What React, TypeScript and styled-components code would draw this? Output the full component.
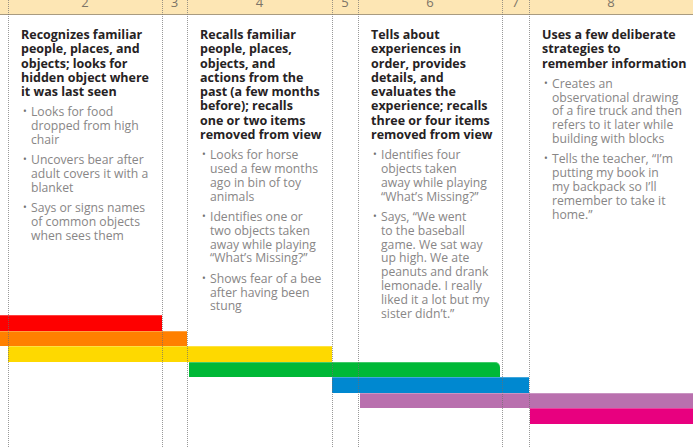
import React from "react";
import styled, { createGlobalStyle } from "styled-components";

const GlobalStyle = createGlobalStyle`
  html, body {
    margin: 0;
    padding: 0;
    background: #ffffff;
  }
  body {
    font-family: "Open Sans", "Liberation Sans", Arial, sans-serif;
  }
`;

// column widths taken from the chart: a sliver, then age columns and gap columns
const Chart = styled.div`
  display: grid;
  grid-template-columns: 8px 154px 25px 145px 26px 144px 27px 1fr;
  grid-template-rows: 15px 300px 16px 15px 16px 15px 16px 15px 16px 1fr;
  width: 693px;
  height: 447px;
  overflow: hidden;
  background: #ffffff;
`;

const HeaderCell = styled.div<{ $col: number }>`
  grid-row: 1;
  grid-column: ${(p) => p.$col};
  background: #fde6b4;
  border-bottom: 1px solid #a99b80;
  overflow: hidden;
  text-align: center;
  color: #7c7467;
  font-size: 13px;
  line-height: 12px;
`;

const HeaderNumber = styled.span`
  display: block;
  margin-top: -4px;
`;

const Divider = styled.div<{ $col: number }>`
  grid-row: 1 / -1;
  grid-column: ${(p) => p.$col};
  border-left: 1px dotted rgba(110, 110, 110, 0.7);
  z-index: 2;
  pointer-events: none;
`;

const Cell = styled.div<{ $col: number }>`
  grid-row: 2;
  grid-column: ${(p) => p.$col};
  padding: 13px 4px 0 13px;
  overflow: visible;
  white-space: nowrap;
`;

const Heading = styled.div`
  font-weight: 700;
  font-size: 12.5px;
  line-height: 14.3px;
  color: #262223;
  margin-bottom: 6px;
`;

const BulletList = styled.ul`
  list-style: none;
  margin: 0;
  padding: 0;
`;

const BulletItem = styled.li`
  display: flex;
  font-size: 12.2px;
  line-height: 13.8px;
  color: #888686;
  & + & {
    margin-top: 6.5px;
  }
`;

const Marker = styled.span`
  flex: 0 0 10px;
  padding-left: 2px;
  box-sizing: border-box;
  color: #6f6f6f;
  font-size: 10px;
`;

const Bar = styled.div<{
  $row: number;
  $from: number;
  $to: number;
  $color: string;
  $inset?: string;
  $round?: boolean;
}>`
  grid-row: ${(p) => p.$row};
  grid-column: ${(p) => p.$from} / ${(p) => p.$to};
  margin: ${(p) => p.$inset || "0"};
  background: ${(p) => p.$color};
  border-top-right-radius: ${(p) => (p.$round ? "5px" : "0")};
  box-shadow: inset 0 1px 0 rgba(255, 255, 255, 0.25);
`;

type Column = {
  col: number;
  heading: string[];
  bullets: string[][];
};

const columns: Column[] = [
  {
    col: 2,
    heading: [
      "Recognizes familiar",
      "people, places, and",
      "objects; looks for",
      "hidden object where",
      "it was last seen",
    ],
    bullets: [
      ["Looks for food", "dropped from high", "chair"],
      ["Uncovers bear after", "adult covers it with a", "blanket"],
      ["Says or signs names", "of common objects", "when sees them"],
    ],
  },
  {
    col: 4,
    heading: [
      "Recalls familiar",
      "people, places,",
      "objects, and",
      "actions from the",
      "past (a few months",
      "before); recalls",
      "one or two items",
      "removed from view",
    ],
    bullets: [
      ["Looks for horse", "used a few months", "ago in bin of toy", "animals"],
      [
        "Identifies one or",
        "two objects taken",
        "away while playing",
        "\u201cWhat\u2019s Missing?\u201d",
      ],
      ["Shows fear of a bee", "after having been", "stung"],
    ],
  },
  {
    col: 6,
    heading: [
      "Tells about",
      "experiences in",
      "order, provides",
      "details, and",
      "evaluates the",
      "experience; recalls",
      "three or four items",
      "removed from view",
    ],
    bullets: [
      [
        "Identifies four",
        "objects taken",
        "away while playing",
        "\u201cWhat\u2019s Missing?\u201d",
      ],
      [
        "Says, \u201cWe went",
        "to the baseball",
        "game. We sat way",
        "up high. We ate",
        "peanuts and drank",
        "lemonade. I really",
        "liked it a lot but my",
        "sister didn\u2019t.\u201d",
      ],
    ],
  },
  {
    col: 8,
    heading: ["Uses a few deliberate", "strategies to", "remember information"],
    bullets: [
      [
        "Creates an",
        "observational drawing",
        "of a fire truck and then",
        "refers to it later while",
        "building with blocks",
      ],
      [
        "Tells the teacher, \u201cI\u2019m",
        "putting my book in",
        "my backpack so I\u2019ll",
        "remember to take it",
        "home.\u201d",
      ],
    ],
  },
];

const headers = [
  { col: 1, label: "" },
  { col: 2, label: "2" },
  { col: 3, label: "3" },
  { col: 4, label: "4" },
  { col: 5, label: "5" },
  { col: 6, label: "6" },
  { col: 7, label: "7" },
  { col: 8, label: "8" },
];

const bars = [
  { row: 3, from: 1, to: 3, color: "#fe0000" },
  { row: 4, from: 1, to: 4, color: "#ff8000" },
  { row: 5, from: 2, to: 5, color: "#fed900" },
  { row: 6, from: 4, to: 7, color: "#00b837", inset: "0 2px 0 2px", round: true },
  { row: 7, from: 5, to: 8, color: "#0088d0" },
  { row: 8, from: 6, to: 9, color: "#b970ae", inset: "0 0 0 2px" },
  { row: 9, from: 8, to: 9, color: "#e8007f", inset: "0 0 0 1px" },
];

const withBreaks = (lines: string[]) =>
  lines.map((line, i) => (
    <React.Fragment key={i}>
      {i > 0 && <br />}
      {line}
    </React.Fragment>
  ));

const App: React.FC = () => {
  return (
    <>
      <GlobalStyle />
      <Chart>
        {headers.map((h) => (
          <HeaderCell key={h.col} $col={h.col}>
            <HeaderNumber>{h.label || "\u00a0"}</HeaderNumber>
          </HeaderCell>
        ))}

        {columns.map((c) => (
          <Cell key={c.col} $col={c.col}>
            <Heading>{withBreaks(c.heading)}</Heading>
            <BulletList>
              {c.bullets.map((b, i) => (
                <BulletItem key={i}>
                  <Marker>•</Marker>
                  <span>{withBreaks(b)}</span>
                </BulletItem>
              ))}
            </BulletList>
          </Cell>
        ))}

        {bars.map((b) => (
          <Bar
            key={b.row}
            $row={b.row}
            $from={b.from}
            $to={b.to}
            $color={b.color}
            $inset={b.inset}
            $round={b.round}
          />
        ))}

        {[2, 3, 4, 5, 6, 7, 8].map((col) => (
          <Divider key={col} $col={col} />
        ))}
      </Chart>
    </>
  );
};

export default App;
